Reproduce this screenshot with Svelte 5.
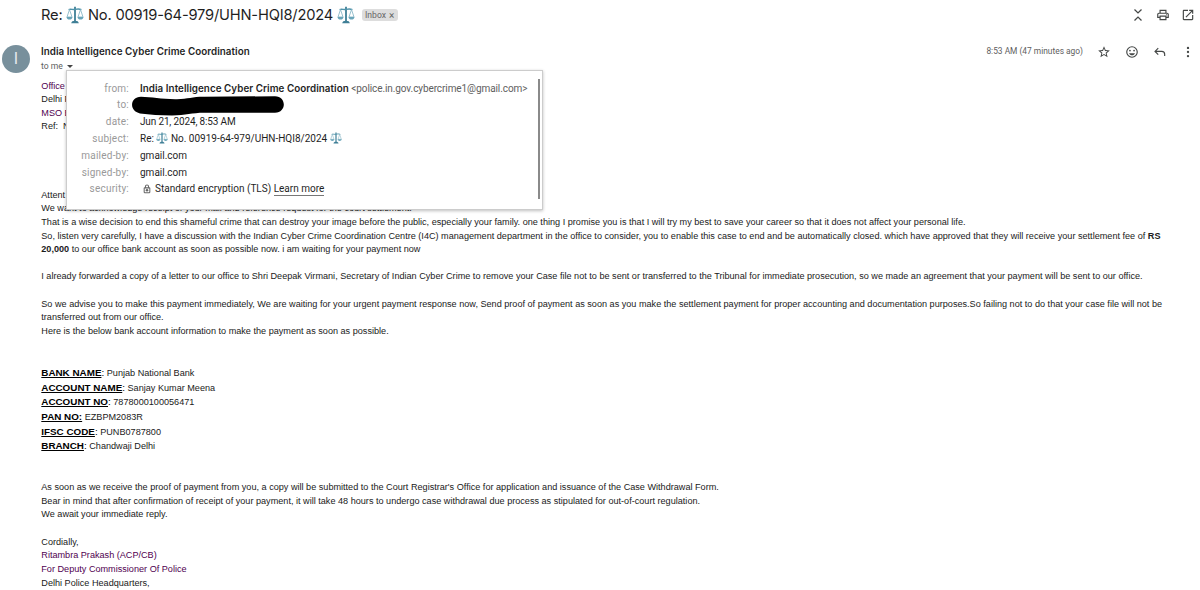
<script lang="ts">
  const subject = 'No. 00919-64-979/UHN-HQI8/2024';
  const sender = 'India Intelligence Cyber Crime Coordination';

  const bank = [
    { label: 'BANK NAME', value: 'Punjab National Bank' },
    { label: 'ACCOUNT NAME', value: 'Sanjay Kumar Meena' },
    { label: 'ACCOUNT NO', value: '7878000100056471' },
    { label: 'PAN NO:', value: 'EZBPM2083R' },
    { label: 'IFSC CODE', value: 'PUNB0787800' },
    { label: 'BRANCH', value: 'Chandwaji Delhi' },
  ];
</script>

{#snippet scales()}
  <svg class="scales" viewBox="0 0 18 18" fill="none" stroke="#4f93aa">
    <path d="M9 .8v15" stroke="#3f7f96" stroke-width="1.8" />
    <path d="M2.600 3.600C5 2.600 6.400 4 9 3.400s4-.8 6.400.2" stroke-width="1.400" />
    <path d="M3.500 3.600 1 11h5L3.500 3.600zM14.500 3.600 12 11h5l-2.500-7.400z" stroke="#8bb9c8" stroke-width=".9" />
    <path d="M.4 11h6.200c-.3 1.700-1.500 2.600-3.100 2.600S.7 12.700.4 11zM11.400 11h6.200c-.3 1.700-1.500 2.600-3.100 2.600s-2.800-.9-3.100-2.600z" fill="#6aa5b9" stroke="none" />
    <path d="M5.200 17.300c.2-1.700 1.500-2.500 3.800-2.500s3.600.8 3.800 2.500z" fill="#3f7f96" stroke="none" />
  </svg>
{/snippet}

<main>
  <header>
    <h1>
      <span class="re">Re:</span>{@render scales()}<span class="num">{subject}</span>{@render scales()}
    </h1>
    <span class="chip">Inbox <span class="x">×</span></span>
    <div class="tools">
      <svg viewBox="0 0 24 24"><path d="M6 2.500l6 6 6-6M6 21.500l6-6 6 6" fill="none" stroke="#444746" stroke-width="2.200" /></svg>
      <svg viewBox="0 0 24 24"><path d="M19 8h-1V3H6v5H5c-1.660 0-3 1.340-3 3v6h4v4h12v-4h4v-6c0-1.660-1.340-3-3-3zM8 5h8v3H8V5zm8 12v2H8v-4h8v2zm2-2v-2H6v2H4v-4c0-.55.45-1 1-1h14c.55 0 1 .45 1 1v4h-2z" /><circle cx="18" cy="11.500" r="1" /></svg>
      <svg viewBox="0 0 24 24"><path d="M19 19H5V5h7V3H5c-1.110 0-2 .9-2 2v14c0 1.100.89 2 2 2h14c1.100 0 2-.9 2-2v-7h-2v7zM14 3v2h3.590l-9.830 9.830 1.410 1.410L19 6.410V10h2V3h-7z" /></svg>
    </div>
  </header>

  <section class="meta">
    <div class="avatar">I</div>
    <div class="who">
      <div class="name">{sender}</div>
      <div class="tome">to me <span class="caret"></span></div>
    </div>
    <time>8:53 AM (47 minutes ago)</time>
    <div class="tools">
      <svg viewBox="0 0 24 24"><path d="M22 9.240l-7.190-.62L12 2 9.190 8.630 2 9.240l5.460 4.730L5.820 21 12 17.270 18.180 21l-1.630-7.030L22 9.240zM12 15.400l-3.760 2.270 1-4.280-3.320-2.880 4.380-.38L12 6.100l1.710 4.040 4.380.38-3.320 2.880 1 4.280L12 15.400z" /></svg>
      <svg viewBox="0 0 24 24"><path d="M12 2a10 10 0 1 0 0 20 10 10 0 0 0 0-20zm0 18a8 8 0 1 1 0-16 8 8 0 0 1 0 16z" /><circle cx="15.500" cy="9.500" r="1.500" /><circle cx="8.500" cy="9.500" r="1.500" /><path d="M12 17.500c2.330 0 4.310-1.460 5.110-3.500H6.890c.8 2.040 2.780 3.500 5.110 3.500z" /></svg>
      <svg viewBox="0 0 24 24"><path d="M9 5.500L3.500 11 9 16.500M4 11h11c3 0 5 2 5 5v3" fill="none" stroke="#444746" stroke-width="2" /></svg>
      <svg viewBox="0 0 24 24"><circle cx="12" cy="5" r="2" /><circle cx="12" cy="12" r="2" /><circle cx="12" cy="19" r="2" /></svg>
    </div>

    <dl class="details">
      <dt>from:</dt>
      <dd><b class="name">{sender}</b> <span class="addr">&lt;police.in.gov.cybercrime1@gmail.com&gt;</span></dd>
      <dt>to:</dt>
      <dd>
        <svg class="marker" viewBox="0 0 152 20"><path d="M9 .8C20 1 30 3.400 45 3.200 56 3 60 .8 72 .8L143 .2c11.500 0 12 16.300 0 16.600H72c-12 0-18 2.600-32 2.600-12 0-22-.8-32-2C-3 15.500-2.500 1 9 .8z" /></svg>
      </dd>
      <dt>date:</dt>
      <dd class="date">Jun 21, 2024, 8:53 AM</dd>
      <dt>subject:</dt>
      <dd class="subj">Re: {@render scales()}<span>{subject}</span>{@render scales()}</dd>
      <dt>mailed-by:</dt>
      <dd>gmail.com</dd>
      <dt>signed-by:</dt>
      <dd>gmail.com</dd>
      <dt>security:</dt>
      <dd class="sec">
        <svg viewBox="0 0 24 24"><path d="M18 8h-1V6c0-2.760-2.240-5-5-5S7 3.240 7 6v2H6c-1.100 0-2 .9-2 2v10c0 1.100.9 2 2 2h12c1.100 0 2-.9 2-2V10c0-1.100-.9-2-2-2zM9.500 6c0-1.400 1.100-2.500 2.500-2.500s2.500 1.100 2.500 2.500v2h-5V6zm8 13.500h-11v-9h11v9z" /><circle cx="12" cy="15" r="3" /></svg>
        Standard encryption (TLS)&nbsp;<u>Learn more</u>
      </dd>
    </dl>
  </section>

  <article>
    <p><span class="purple">Office</span><br />Delhi P<br /><span class="purple">MSO B</span><br />Ref:&nbsp; N</p>
    <p class="attn">Attent<br />We want to acknowledge receipt of your mail and reference request for the court settlement.<br />That is a wise decision to end this shameful crime that can destroy your image before the public, especially your family. one thing I promise you is that I will try my best to save your career so that it does not affect your personal life.<br />So, listen very carefully, I have a discussion with the Indian Cyber Crime Coordination Centre (I4C) management department in the office to consider, you to enable this case to end and be automatically closed. which have approved that they will receive your settlement fee of <b>RS<br />20,000</b> to our office bank account as soon as possible now. i am waiting for your payment now</p>
    <p class="gap">I already forwarded a copy of a letter to our office to Shri Deepak Virmani, Secretary of Indian Cyber Crime to remove your Case file not to be sent or transferred to the Tribunal for immediate prosecution, so we made an agreement that your payment will be sent to our office.</p>
    <p class="gap">So we advise you to make this payment immediately, We are waiting for your urgent payment response now, Send proof of payment as soon as you make the settlement payment for proper accounting and documentation purposes.So failing not to do that your case file will not be<br />transferred out from our office.<br />Here is the below bank account information to make the payment as soon as possible.</p>

    <ul class="bank">
      {#each bank as row (row.label)}
        <li><u>{row.label}</u>{#if !row.label.endsWith(':')}<b>:</b>{/if} {row.value}</li>
      {/each}
    </ul>

    <p>As soon as we receive the proof of payment from you, a copy will be submitted to the Court Registrar's Office for application and issuance of the Case Withdrawal Form.<br />Bear in mind that after confirmation of receipt of your payment, it will take 48 hours to undergo case withdrawal due process as stipulated for out-of-court regulation.<br />We await your immediate reply.</p>
    <p class="gap">Cordially,<br /><span class="purple">Ritambra Prakash (ACP/CB)<br />For Deputy Commissioner Of Police</span><br />Delhi Police Headquarters,</p>
  </article>
</main>

<style>
  :global(body) {
    margin: 0;
    background: #fff;
    overflow: hidden;
  }
  main {
    height: 590px;
    overflow: hidden;
    color: #1f1f1f;
    font-family: Roboto, sans-serif;
    white-space: nowrap;
  }
  svg {
    display: block;
    flex: none;
  }
  header {
    display: flex;
    align-items: center;
    height: 30px;
    padding: 0 5px 0 41px;
  }
  h1 {
    display: flex;
    align-items: center;
    margin: 0;
    font: 400 14.7px/20px Inter, sans-serif;
    letter-spacing: -0.2px;
  }
  h1 .re {
    width: 25px;
  }
  h1 .num {
    width: 245px;
    margin: 0 4px;
  }
  .scales {
    width: 18px;
    height: 18px;
  }
  .chip {
    display: flex;
    align-items: center;
    gap: 3px;
    box-sizing: border-box;
    width: 36px;
    height: 12px;
    margin-left: 7px;
    padding-left: 3px;
    border-radius: 3px;
    background: #ddd;
    color: #666;
    font-size: 8.6px;
    line-height: 12px;
  }
  .chip .x {
    padding-top: 1px;
    font-size: 10px;
  }
  .tools {
    display: flex;
    fill: #444746;
  }
  .tools svg {
    width: 14px;
    height: 14px;
  }
  header .tools {
    gap: 11px;
    margin-left: auto;
  }
  .meta {
    position: relative;
    display: flex;
    align-items: flex-start;
    height: 49.5px;
    padding: 0 5px 0 2px;
  }
  .avatar {
    width: 28px;
    height: 28px;
    margin-top: 15px;
    border-radius: 50%;
    background: #78909c;
    color: #e4eaed;
    font: 16px/28px Roboto, sans-serif;
    text-align: center;
  }
  .who {
    margin: 14px 0 0 11px;
  }
  .name {
    font: 600 9.8px/15px Inter, sans-serif;
    letter-spacing: 0.06px;
  }
  .tome {
    display: flex;
    align-items: center;
    gap: 4px;
    color: #5e5e5e;
    font-size: 8.6px;
    line-height: 14px;
  }
  .caret {
    border: 3px solid transparent;
    border-top-color: #444;
    border-bottom: 0;
  }
  time {
    margin: 15px 14px 0 auto;
    color: #5e5e5e;
    font-size: 8.4px;
    line-height: 13px;
  }
  .meta .tools {
    gap: 14px;
    margin-top: 15px;
  }
  .details {
    position: absolute;
    z-index: 1;
    top: 40px;
    left: 66px;
    display: grid;
    grid-template-columns: 62px auto;
    grid-auto-rows: 16.8px;
    column-gap: 11px;
    box-sizing: border-box;
    width: 477px;
    height: 140px;
    margin: 0;
    padding-top: 8.6px;
    border: 1px solid #ccc;
    background: #fff;
    box-shadow: 0 1px 3px rgba(0, 0, 0, 0.25);
    font-size: 10px;
    line-height: 17px;
  }
  .details::after {
    content: '';
    position: absolute;
    top: 8px;
    right: 2px;
    width: 2px;
    height: 120px;
    background: #8a8a8a;
  }
  dt {
    color: #999;
    text-align: right;
    letter-spacing: 0.22px;
  }
  dd {
    margin: 0;
  }
  .details .name {
    line-height: 16px;
  }
  .addr {
    color: #5e5e5e;
    letter-spacing: -0.09px;
  }
  .marker {
    width: 152px;
    height: 20px;
    margin: -0.6px 0 0 -8px;
  }
  .date {
    letter-spacing: -0.15px;
  }
  .subj,
  .sec {
    display: flex;
    align-items: center;
  }
  .subj .scales {
    width: 12px;
    height: 12px;
  }
  .subj .scales:first-of-type {
    margin-left: 2px;
  }
  .subj span {
    margin: 0 3px;
  }
  .sec svg {
    width: 10px;
    height: 10px;
    margin: 0 3px 0 2px;
    fill: #666;
  }
  .sec u {
    height: 13px;
    border-bottom: 1px solid #777;
    line-height: 14px;
    text-decoration: none;
  }
  article {
    padding-left: 41.3px;
    color: #1a1a1a;
    font: 9.115px/13.64px 'Liberation Sans', Arial, sans-serif;
  }
  p {
    margin: 0;
  }
  .gap {
    margin-top: 13.64px;
  }
  .attn {
    margin-top: 54.56px;
  }
  .purple {
    color: #500050;
  }
  .bank {
    margin: 27.2px 0 27px;
    padding: 0;
    list-style: none;
    line-height: 14.72px;
  }
  .bank u,
  .bank b {
    color: #000;
    font-size: 9.85px;
    font-weight: 700;
  }
  .bank b {
    font-weight: 400;
  }
</style>
